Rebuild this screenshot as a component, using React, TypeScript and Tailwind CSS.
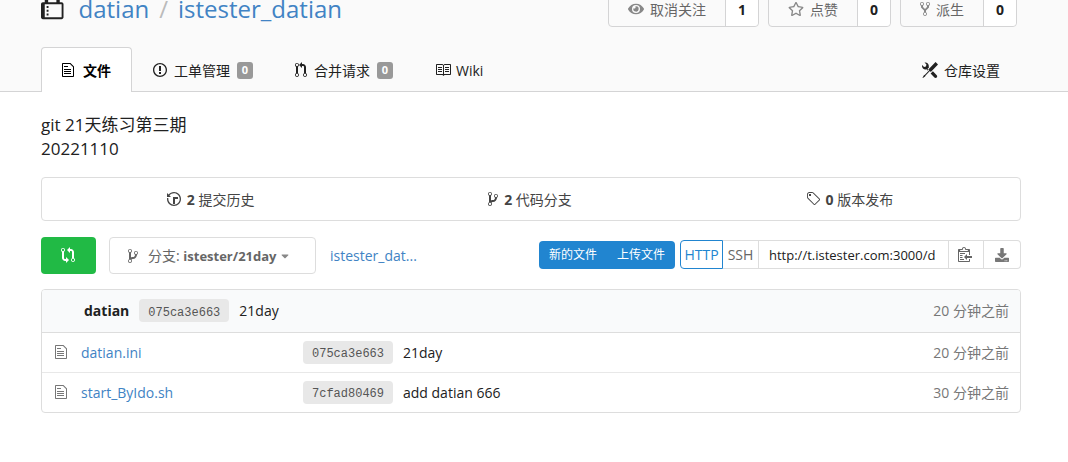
import { useState } from 'react'
import { FaCaretDown, FaDownload, FaEye, FaRegStar } from 'react-icons/fa'

// Octicon outlines: [width, path], all drawn on a 16 unit high grid
const icons = {
  lock: [12, 'M4 13H3v-1h1v1zm8-6v7c0 .55-.45 1-1 1H1c-.55 0-1-.45-1-1V7c0-.55.45-1 1-1h1V4c0-2.2 1.8-4 4-4s4 1.8 4 4v2h1c.55 0 1 .45 1 1zM3.8 6h4.41V4c0-1.22-.98-2.2-2.2-2.2-1.22 0-2.2.98-2.2 2.2v2H3.8zM11 7H2v7h9V7zM4 8H3v1h1V8zm0 2H3v1h1v-1z'],
  file: [12, 'M6 5H2V4h4v1zM2 8h7V7H2v1zm0 2h7V9H2v1zm0 2h7v-1H2v1zm10-7.5V14c0 .55-.45 1-1 1H1c-.55 0-1-.45-1-1V2c0-.55.45-1 1-1h7.5L12 4.5zM11 5L8 2H1v12h10V5z'],
  issue: [14, 'M7 2.3c3.14 0 5.7 2.56 5.7 5.7s-2.56 5.7-5.7 5.7A5.71 5.71 0 0 1 1.3 8c0-3.14 2.56-5.7 5.7-5.7zM7 1C3.14 1 0 4.14 0 8s3.14 7 7 7 7-3.14 7-7-3.14-7-7-7zm1 3H6v5h2V4zm0 6H6v2h2v-2z'],
  pull: [12, 'M11 11.28V5c-.03-.78-.34-1.47-.94-2.06C9.46 2.35 8.78 2.03 8 2H7V0L4 3l3 3V4h1c.27.02.48.11.69.31.21.2.3.42.31.69v6.28A1.993 1.993 0 0 0 10 15a1.993 1.993 0 0 0 1-3.72zm-1 2.92c-.66 0-1.2-.55-1.2-1.2 0-.65.55-1.2 1.2-1.2.65 0 1.2.55 1.2 1.2 0 .65-.55 1.2-1.2 1.2zM4 3c0-1.11-.89-2-2-2a1.993 1.993 0 0 0-1 3.72v6.56A1.993 1.993 0 0 0 2 15a1.993 1.993 0 0 0 1-3.72V4.72c.59-.34 1-.98 1-1.72zm-.8 10c0 .66-.55 1.2-1.2 1.2-.65 0-1.2-.55-1.2-1.2 0-.65.55-1.2 1.2-1.2.65 0 1.2.55 1.2 1.2zM2 4.2C1.34 4.2.8 3.65.8 3c0-.65.55-1.2 1.2-1.2.65 0 1.2.55 1.2 1.2 0 .65-.55 1.2-1.2 1.2z'],
  book: [16, 'M3 5h4v1H3V5zm0 3h4V7H3v1zm0 2h4V9H3v1zm11-5h-4v1h4V5zm0 2h-4v1h4V7zm0 2h-4v1h4V9zm2-6v9c0 .55-.45 1-1 1H9.5l-1 1-1-1H2c-.55 0-1-.45-1-1V3c0-.55.45-1 1-1h5.5l1 1 1-1H15c.55 0 1 .45 1 1zm-8 .5L7.5 3H2v9h6V3.5zm7-.5H9.5l-.5.5V12h6V3z'],
  tools: [16, 'M4.48 7.27c.26.26 1.28 1.33 1.28 1.33l.56-.58-.88-.91 1.69-1.8s-.76-.74-.43-.45c.32-1.19.03-2.51-.87-3.44C4.93.5 3.66.2 2.52.51l1.93 2-.51 1.96-1.89.52-1.93-1.99C-.19 4.17.1 5.48 1 6.4c.94.98 2.29 1.26 3.48.87zm6.44 1.94l-2.33 2.3 3.84 3.98c.31.33.73.49 1.14.49.41 0 .82-.16 1.14-.49.63-.65.63-1.7 0-2.35l-3.79-3.93zM16 2.53L13.55 0 6.33 7.46l.88.91-4.31 4.46-.99.53-1.39 2.27.35.37 2.2-1.44.51-1.02L7.9 9.08l.88.91L16 2.53z'],
  branch: [10, 'M10 5c0-1.11-.89-2-2-2a1.993 1.993 0 0 0-1 3.72v.3c-.02.52-.23.98-.63 1.38-.4.4-.86.61-1.38.63-.83.02-1.48.16-2 .45V4.72a1.993 1.993 0 0 0-1-3.72C.88 1 0 1.89 0 3a2 2 0 0 0 1 1.72v6.56c-.59.35-1 .99-1 1.72 0 1.11.89 2 2 2 1.11 0 2-.89 2-2 0-.53-.2-1-.53-1.36.09-.06.48-.41.59-.47.25-.11.56-.17.94-.17 1.05-.05 1.95-.45 2.75-1.25S8.95 7.77 9 6.73h-.02C9.59 6.37 10 5.73 10 5zM2 1.8c.66 0 1.2.55 1.2 1.2 0 .65-.55 1.2-1.2 1.2C1.35 4.2.8 3.65.8 3c0-.65.55-1.2 1.2-1.2zm0 12.41c-.66 0-1.2-.55-1.2-1.2 0-.65.55-1.2 1.2-1.2.65 0 1.2.55 1.2 1.2 0 .65-.55 1.2-1.2 1.2zm6-8c-.66 0-1.2-.55-1.2-1.2 0-.65.55-1.2 1.2-1.2.65 0 1.2.55 1.2 1.2 0 .65-.55 1.2-1.2 1.2z'],
  history: [14, 'M8 13H6V6h5v2H8v5zM7 1C4.81 1 2.87 2.02 1.59 3.59L0 2v4h4L2.5 4.5C3.55 3.17 5.17 2.3 7 2.3c3.14 0 5.7 2.56 5.7 5.7s-2.56 5.7-5.7 5.7A5.71 5.71 0 0 1 1.3 8c0-.34.03-.67.09-1H.08C.03 7.33 0 7.66 0 8c0 3.86 3.14 7 7 7s7-3.14 7-7-3.14-7-7-7z'],
  tag: [14, 'M7.73 1.73C7.26 1.26 6.62 1 5.96 1H3.5C2.13 1 1 2.13 1 3.5v2.47c0 .66.27 1.3.73 1.77l6.06 6.06c.39.39 1.02.39 1.41 0l4.59-4.59a.996.996 0 0 0 0-1.41L7.73 1.73zM2.38 7.09c-.31-.3-.47-.7-.47-1.13V3.5c0-.88.72-1.59 1.59-1.59h2.47c.42 0 .83.16 1.13.47l6.14 6.13-4.73 4.73-6.13-6.15zM3.01 3h2v2H3V3h.01z'],
  compare: [14, 'M5 12H4c-.27-.02-.48-.11-.69-.31-.21-.2-.3-.42-.31-.69V4.72A1.993 1.993 0 0 0 2 1a1.993 1.993 0 0 0-1 3.72V11c.03.78.34 1.47.94 2.06.6.59 1.28.91 2.06.94h1v2l3-3-3-3v2zM2 1.8c.66 0 1.2.55 1.2 1.2 0 .65-.55 1.2-1.2 1.2C1.35 4.2.8 3.65.8 3c0-.65.55-1.2 1.2-1.2zm11 9.48V5c-.03-.78-.34-1.47-.94-2.06-.6-.59-1.28-.91-2.06-.94H9V0L6 3l3 3V4h1c.27.02.48.11.69.31.21.2.3.42.31.69v6.28A1.993 1.993 0 0 0 12 15a1.993 1.993 0 0 0 1-3.72zm-1 2.92c-.66 0-1.2-.55-1.2-1.2 0-.65.55-1.2 1.2-1.2.65 0 1.2.55 1.2 1.2 0 .65-.55 1.2-1.2 1.2z'],
  fork: [10, 'M8 1a1.993 1.993 0 0 0-1 3.72V6L5 8 3 6V4.72A1.993 1.993 0 0 0 2 1a1.993 1.993 0 0 0-1 3.72V6.5l3 3v1.78A1.993 1.993 0 0 0 5 15a1.993 1.993 0 0 0 1-3.72V9.5l3-3V4.72A1.993 1.993 0 0 0 8 1zM2 4.2C1.34 4.2.8 3.65.8 3c0-.65.55-1.2 1.2-1.2.65 0 1.2.55 1.2 1.2 0 .65-.55 1.2-1.2 1.2zm3 10c-.66 0-1.2-.55-1.2-1.2 0-.65.55-1.2 1.2-1.2.65 0 1.2.55 1.2 1.2 0 .65-.55 1.2-1.2 1.2zm3-10c-.66 0-1.2-.55-1.2-1.2 0-.65.55-1.2 1.2-1.2.65 0 1.2.55 1.2 1.2 0 .65-.55 1.2-1.2 1.2z'],
  clippy: [14, 'M2 13h4v1H2v-1zm5-6H2v1h5V7zm2 3V8l-3 3 3 3v-2h5v-2H9zM4.5 9H2v1h2.5V9zM2 12h2.5v-1H2v1zm9 1h1v2c-.02.28-.11.52-.3.7-.19.18-.42.28-.7.3H1c-.55 0-1-.45-1-1V4c0-.55.45-1 1-1h3c0-1.11.89-2 2-2 1.11 0 2 .89 2 2h3c.55 0 1 .45 1 1v5h-1V6H1v9h10v-2zM2 5h8c0-.55-.45-1-1-1H8c-.55 0-1-.45-1-1s-.45-1-1-1-1 .45-1 1-.45 1-1 1H3c-.55 0-1 .45-1 1z'],
} as const

type IconName = keyof typeof icons

function Octicon({ name, className = 'h-4' }: { name: IconName; className?: string }) {
  const [width, path] = icons[name]
  return (
    <svg viewBox={`0 0 ${width} 16`} className={`w-auto shrink-0 ${className}`} fill="currentColor" aria-hidden="true">
      <path d={path} />
    </svg>
  )
}

const actions = [
  { label: '取消关注', count: 1, icon: <FaEye className="size-4" /> },
  { label: '点赞', count: 0, icon: <FaRegStar className="size-4" /> },
  { label: '派生', count: 0, icon: <Octicon name="fork" /> },
]

const tabs: { label: string; icon: IconName; count?: number }[] = [
  { label: '工单管理', icon: 'issue', count: 0 },
  { label: '合并请求', icon: 'pull', count: 0 },
  { label: 'Wiki', icon: 'book' },
]

const stats: { label: string; icon: IconName; count: number }[] = [
  { label: '提交历史', icon: 'history', count: 2 },
  { label: '代码分支', icon: 'branch', count: 2 },
  { label: '版本发布', icon: 'tag', count: 0 },
]

const files = [
  { name: 'datian.ini', sha: '075ca3e663', message: '21day', time: '20 分钟之前' },
  { name: 'start_ByIdo.sh', sha: '7cfad80469', message: 'add datian 666', time: '30 分钟之前' },
]

function Sha({ children }: { children: string }) {
  return (
    <a
      href="#commit"
      className="flex h-[23px] w-[90px] items-center justify-center rounded bg-[#e8e8e8] pt-1 font-['Liberation_Mono',monospace] text-[12px] text-[#555]"
    >
      {children}
    </a>
  )
}

function RepoHeader() {
  return (
    <header className="border-b border-[#d4d4d5] bg-[#fafafa] pr-[47px] pl-[41px]">
      <div className="-mt-[11px] flex h-10 items-center justify-between">
        <h1 className="flex h-full items-center text-[24px] text-[#4183c4]">
          <Octicon name="lock" className="mt-0.5 mr-[15px] h-[30px] self-start text-[#212121]" />
          <a href="#owner">datian</a>
          <span className="mx-[10px] text-[#bbb]">/</span>
          <a href="#repo">istester_datian</a>
        </h1>
        <div className="mr-1 flex gap-[9px]">
          {actions.map((a) => (
            <div key={a.label} className="flex h-[35px] rounded border border-[#d4d4d5]">
              <button className="flex items-center gap-[6px] px-[19px] text-[14px] text-[#666]">
                <span className="text-[#888]">{a.icon}</span>
                {a.label}
              </button>
              <a
                href="#count"
                className="flex w-[33px] items-center justify-center rounded-r border-l border-[#d4d4d5] bg-white text-[14px] font-bold text-[#212121]"
              >
                {a.count}
              </a>
            </div>
          ))}
        </div>
      </div>

      <nav className="mt-[18px] flex h-11 text-[14px] text-[#212121]" aria-label="Repository">
        <a
          href="#files"
          className="-mb-px flex items-center gap-[9px] rounded-t border border-b-0 border-[#d4d4d5] bg-white px-5 font-bold text-black"
        >
          <Octicon name="file" />
          文件
        </a>
        {tabs.map((t) => (
          <a key={t.label} href={`#${t.icon}`} className="flex items-center px-[21px] pt-0.5">
            <Octicon name={t.icon} />
            <span className={t.icon === 'book' ? 'ml-[5px]' : 'ml-[7px]'}>{t.label}</span>
            {t.count !== undefined && (
              <span className="ml-[7px] flex h-[17px] w-4 items-center justify-center rounded-[3px] bg-[#999] text-[11px] font-bold text-white">
                {t.count}
              </span>
            )}
          </a>
        ))}
        <a href="#settings" className="ml-auto flex items-center gap-[6px] px-[21px] pt-0.5">
          <Octicon name="tools" />
          仓库设置
        </a>
      </nav>
    </header>
  )
}

function CloneBar() {
  const [protocol, setProtocol] = useState('HTTP')

  return (
    <div className="flex text-[14px]">
      {['HTTP', 'SSH'].map((p) => (
        <button
          key={p}
          onClick={() => setProtocol(p)}
          className={
            p === protocol
              ? 'flex h-[29px] w-[43px] items-center justify-center rounded-l border border-[#2185d0] text-[#2185d0]'
              : 'flex h-[29px] w-[35px] items-center justify-center border-y border-[#ddd] text-[#666]'
          }
        >
          {p}
        </button>
      ))}
      <input
        aria-label="Clone URL"
        readOnly
        value="http://t.istester.com:3000/d"
        className="h-[29px] w-[190px] border-y border-l border-[#ddd] bg-white px-[10px] text-[13px] text-[#212121] outline-none"
      />
      <button aria-label="Copy" className="flex h-[29px] w-9 items-center justify-center border border-[#ddd] pr-0.5 pb-0.5 text-[#666]">
        <Octicon name="clippy" />
      </button>
      <button
        aria-label="Download"
        className="flex h-[29px] w-[37px] items-center justify-center rounded-r border border-l-0 border-[#ddd] text-[#777]"
      >
        <FaDownload className="size-[14px]" />
      </button>
    </div>
  )
}

export default function App() {
  return (
    <div className="min-h-screen bg-white font-['Open_Sans','Noto_Sans_CJK_SC',sans-serif] text-[#212121]">
      <RepoHeader />

      <main className="pt-[21px] pr-[47px] pb-12 pl-[41px]">
        <p className="text-[17px] leading-6">
          git 21天练习第三期
          <br />
          20221110
        </p>

        <div className="mt-4 grid h-11 grid-cols-3 rounded border border-[#ddd] px-[10px] text-[14px] text-[#444]">
          {stats.map((s) => (
            <a key={s.label} href={`#${s.icon}`} className="flex items-center justify-center gap-[6px] pr-0.5">
              <Octicon name={s.icon} />
              <span>
                <b>{s.count}</b> {s.label}
              </span>
            </a>
          ))}
        </div>

        <div className="mt-4 flex items-center">
          <button aria-label="Compare" className="flex h-[37px] w-[55px] items-center justify-center rounded bg-[#21ba45] pr-0.5 pb-0.5 text-white">
            <Octicon name="compare" />
          </button>
          <button className="ml-[13px] flex h-[37px] w-[207px] items-center rounded border border-[#ddd] px-[18px] text-[14px] whitespace-nowrap text-[#666]">
            <Octicon name="branch" className="mr-[10px] h-4" />
            <span>
              分支: <b className="text-[13px]">istester/21day</b>
            </span>
            <FaCaretDown className="ml-[3px] size-3 shrink-0 text-[#888]" />
          </button>
          <a href="#root" className="ml-[14px] text-[14px] text-[#4183c4]">
            istester_dat...
          </a>

          <div className="ml-auto flex items-end pb-0.5">
            <div className="mr-[5px] flex h-7 overflow-hidden rounded bg-[#2185d0] text-[12px] text-white">
              <button className="w-[68px]">新的文件</button>
              <button className="w-[68px]">上传文件</button>
            </div>
            <CloneBar />
          </div>
        </div>

        <div className="mt-[15px] overflow-hidden rounded border border-[#ddd]">
          <table className="w-full table-fixed text-left text-[14px]">
            <colgroup>
              <col className="w-[261px]" />
              <col />
              <col className="w-[140px]" />
            </colgroup>
            <thead>
              <tr className="h-[42px] border-b border-[#ddd] bg-[#f9fafb]">
                <th colSpan={2} className="pl-[42px] font-normal">
                  <div className="flex items-center gap-[10px]">
                    <b>datian</b>
                    <Sha>075ca3e663</Sha>
                    <span>21day</span>
                  </div>
                </th>
                <th className="pr-[11px] text-right font-normal text-[#777]">20 分钟之前</th>
              </tr>
            </thead>
            <tbody>
              {files.map((f) => (
                <tr key={f.name} className="h-10 border-b border-[#e8e8e8] last:border-b-0">
                  <td className="pl-[13px]">
                    <a href="#file" className="flex items-center gap-[14px] text-[#4183c4]">
                      <Octicon name="file" className="h-4 text-[#777]" />
                      {f.name}
                    </a>
                  </td>
                  <td>
                    <div className="flex items-center gap-[10px]">
                      <Sha>{f.sha}</Sha>
                      <span>{f.message}</span>
                    </div>
                  </td>
                  <td className="pr-[11px] text-right text-[#777]">{f.time}</td>
                </tr>
              ))}
            </tbody>
          </table>
        </div>
      </main>
    </div>
  )
}
